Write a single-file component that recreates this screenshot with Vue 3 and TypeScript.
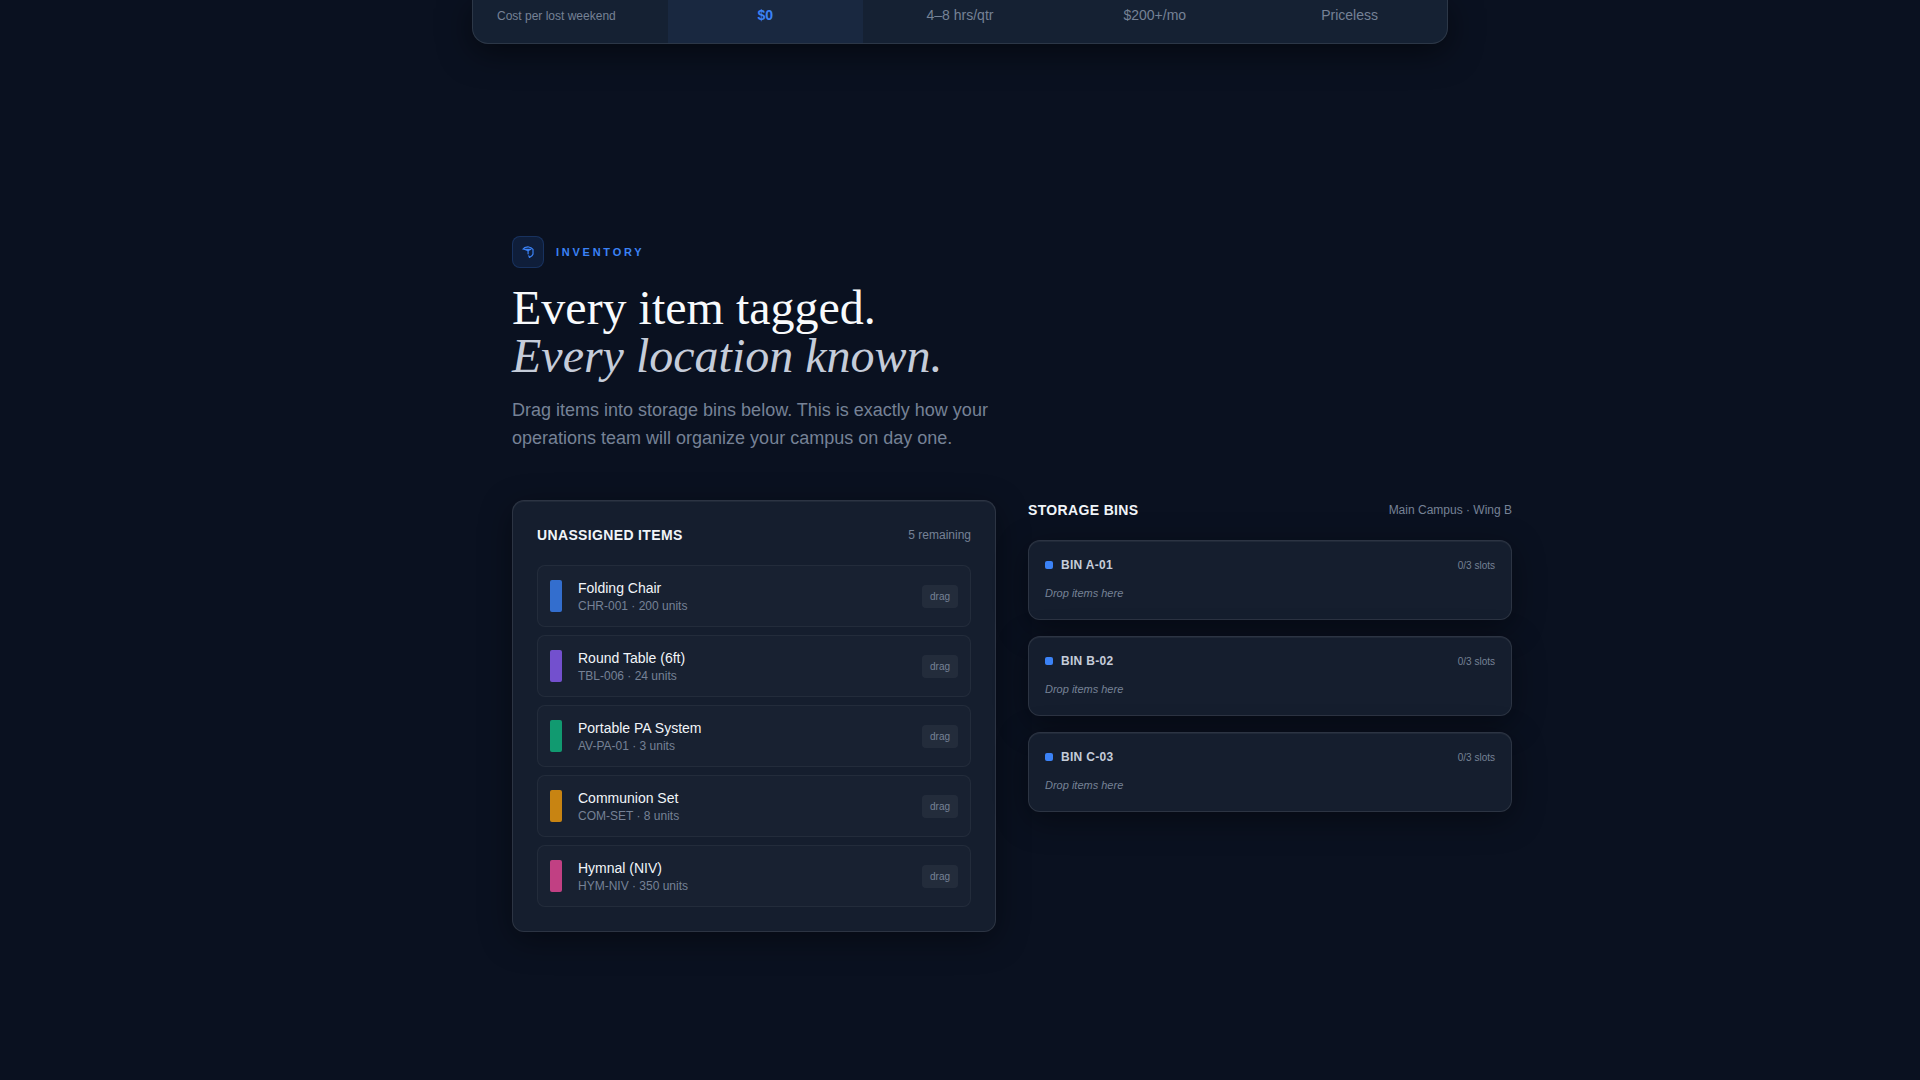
<script setup lang="ts">
import { computed, ref } from 'vue'

interface Item {
  name: string
  sku: string
  units: number
  color: string
}

interface Bin {
  name: string
  capacity: number
  items: Item[]
}

const costs: string[] = ['4–8 hrs/qtr', '$200+/mo', 'Priceless']

const items = ref<Item[]>([
  { name: 'Folding Chair', sku: 'CHR-001', units: 200, color: '#3b82f6' },
  { name: 'Round Table (6ft)', sku: 'TBL-006', units: 24, color: '#8b5cf6' },
  { name: 'Portable PA System', sku: 'AV-PA-01', units: 3, color: '#10b981' },
  { name: 'Communion Set', sku: 'COM-SET', units: 8, color: '#f59e0b' },
  { name: 'Hymnal (NIV)', sku: 'HYM-NIV', units: 350, color: '#ec4899' },
])

const bins = ref<Bin[]>([
  { name: 'BIN A-01', capacity: 3, items: [] },
  { name: 'BIN B-02', capacity: 3, items: [] },
  { name: 'BIN C-03', capacity: 3, items: [] },
])

const dragged = ref<Item | null>(null)
const remaining = computed(() => `${items.value.length} remaining`)

function drop(bin: Bin): void {
  const item = dragged.value
  if (!item || bin.items.length >= bin.capacity) return
  bin.items.push(item)
  items.value = items.value.filter((i) => i.sku !== item.sku)
  dragged.value = null
}
</script>

<template>
  <main class="page">
    <div class="compare">
      <table>
        <tbody>
          <tr>
            <th scope="row">Cost per lost weekend</th>
            <td class="ours">$0</td>
            <td v-for="cost in costs" :key="cost">{{ cost }}</td>
          </tr>
        </tbody>
      </table>
    </div>

    <section class="inventory">
      <div class="eyebrow">
        <span class="badge">
          <svg width="14" height="14" viewBox="0 0 14 14" fill="none" stroke="currentColor" stroke-width="1.2" stroke-linecap="round" stroke-linejoin="round" aria-hidden="true">
            <path d="M2 4.2 3.6 2.7 6.9 1.8l3 .9 2.1 1.7v4.8l-1.1 1.6-2.5 1.6-.6-1.5" />
            <path d="M3.2 4.3 7 5.6l2.9-1.4" />
            <path d="M4 4.3h5.4" />
            <path d="M7.1 5.5v3.3" />
          </svg>
        </span>
        <span class="label">INVENTORY</span>
      </div>
      <h2>Every item tagged.<br /><em>Every location known.</em></h2>
      <p class="lead">Drag items into storage bins below. This is exactly how your operations team will organize your campus on day one.</p>

      <div class="columns">
        <div class="card unassigned">
          <header>
            <h3>UNASSIGNED ITEMS</h3>
            <span class="note">{{ remaining }}</span>
          </header>
          <ul>
            <li v-for="item in items" :key="item.sku" draggable="true" @dragstart="dragged = item">
              <span class="swatch" :style="{ background: item.color }"></span>
              <div class="text">
                <div class="name">{{ item.name }}</div>
                <div class="note">{{ item.sku }} · {{ item.units }} units</div>
              </div>
              <span class="drag">drag</span>
            </li>
          </ul>
        </div>

        <div class="storage">
          <header>
            <h3>STORAGE BINS</h3>
            <span class="note">Main Campus · Wing B</span>
          </header>
          <div class="bins">
            <div v-for="bin in bins" :key="bin.name" class="card bin" @dragover.prevent @drop="drop(bin)">
              <div class="bin-head">
                <span class="dot"></span>
                <h4>{{ bin.name }}</h4>
                <span class="slots">{{ bin.items.length }}/{{ bin.capacity }} slots</span>
              </div>
              <p v-if="!bin.items.length" class="hint">Drop items here</p>
              <p v-for="item in bin.items" :key="item.sku" class="hint">{{ item.name }}</p>
            </div>
          </div>
        </div>
      </div>
    </section>
  </main>
</template>

<style>
body {
  margin: 0;
  background: #0a1120;
}
</style>

<style scoped>
* {
  box-sizing: border-box;
}

.page {
  min-height: 100vh;
  background: #0a1120;
  color: #f1f5f9;
  font-family: "Liberation Sans", Arial, sans-serif;
}

h2,
h3,
h4,
p,
ul {
  margin: 0;
  padding: 0;
}

.compare {
  max-width: 976px;
  margin: 0 auto;
  overflow: hidden;
  border: 1px solid rgba(255, 255, 255, 0.1);
  border-top: 0;
  border-radius: 0 0 16px 16px;
  background: #152133;
  box-shadow: 0 8px 32px rgba(0, 0, 0, 0.5);
}

table {
  width: 100%;
  table-layout: fixed;
  border-collapse: collapse;
}

th,
td {
  padding: 5px 24px 17px;
  text-align: center;
  vertical-align: baseline;
  font-size: 14px;
  line-height: 20px;
  font-weight: 400;
  color: #768296;
}

th {
  text-align: left;
  font-size: 12px;
  white-space: nowrap;
}

td.ours {
  background: #192840;
  color: #3b82f6;
  font-weight: 700;
}

.inventory {
  max-width: 1104px;
  margin: 0 auto;
  padding: 192px 0 148px 104px;
}

.eyebrow {
  display: flex;
  align-items: center;
  gap: 12px;
}

.badge {
  display: flex;
  align-items: center;
  justify-content: center;
  width: 32px;
  height: 32px;
  border: 1px solid rgba(59, 130, 246, 0.2);
  border-radius: 8px;
  background: rgba(59, 130, 246, 0.12);
  color: #3b82f6;
}

.label {
  font-size: 11px;
  line-height: 16px;
  font-weight: 700;
  letter-spacing: 0.25em;
  color: #3b82f6;
}

h2 {
  margin-top: 16px;
  font-family: "Liberation Serif", "Times New Roman", serif;
  font-size: 48px;
  line-height: 48px;
  font-weight: 400;
  color: #f8fafc;
}

h2 em {
  color: #c5ccd9;
}

.lead {
  max-width: 512px;
  margin-top: 16px;
  font-size: 18px;
  line-height: 28px;
  color: #768296;
}

.columns {
  display: grid;
  grid-template-columns: 1fr 1fr;
  align-items: start;
  gap: 32px;
  margin-top: 48px;
}

.card {
  border: 1px solid rgba(255, 255, 255, 0.1);
  border-radius: 12px;
  background: #151e2e;
  box-shadow: 0 8px 32px rgba(0, 0, 0, 0.4), inset 0 1px 0 rgba(255, 255, 255, 0.05);
}

.unassigned {
  padding: 24px;
}

header {
  display: flex;
  align-items: center;
  justify-content: space-between;
  margin-bottom: 20px;
}

h3 {
  font-size: 14px;
  line-height: 20px;
  letter-spacing: 0.025em;
}

.note {
  font-size: 12px;
  line-height: 16px;
  color: #768296;
}

ul {
  display: flex;
  flex-direction: column;
  gap: 8px;
  list-style: none;
}

li {
  display: flex;
  align-items: center;
  gap: 16px;
  padding: 12px;
  border: 1px solid rgba(255, 255, 255, 0.05);
  border-radius: 8px;
  background: #182131;
  cursor: grab;
}

.swatch {
  width: 12px;
  height: 32px;
  border-radius: 2px;
  opacity: 0.8;
}

.text {
  flex: 1;
}

.name {
  font-size: 14px;
  line-height: 20px;
}

.drag {
  padding: 4px 8px;
  border-radius: 4px;
  background: rgba(255, 255, 255, 0.05);
  font-size: 10px;
  line-height: 15px;
  color: #768296;
}

.bins {
  display: flex;
  flex-direction: column;
  gap: 16px;
}

.bin {
  min-height: 80px;
  padding: 16px;
}

.bin-head {
  display: flex;
  align-items: center;
  gap: 8px;
  height: 16px;
  margin-bottom: 12px;
}

.dot {
  width: 8px;
  height: 8px;
  border-radius: 2px;
  background: #3b82f6;
}

h4 {
  flex: 1;
  font-size: 12px;
  line-height: 16px;
  letter-spacing: 0.025em;
  color: #c5ccd9;
}

.slots {
  font-size: 10px;
  line-height: 15px;
  color: #768296;
}

.hint {
  font-size: 11px;
  line-height: 16px;
  font-style: italic;
  color: #768296;
}
</style>
